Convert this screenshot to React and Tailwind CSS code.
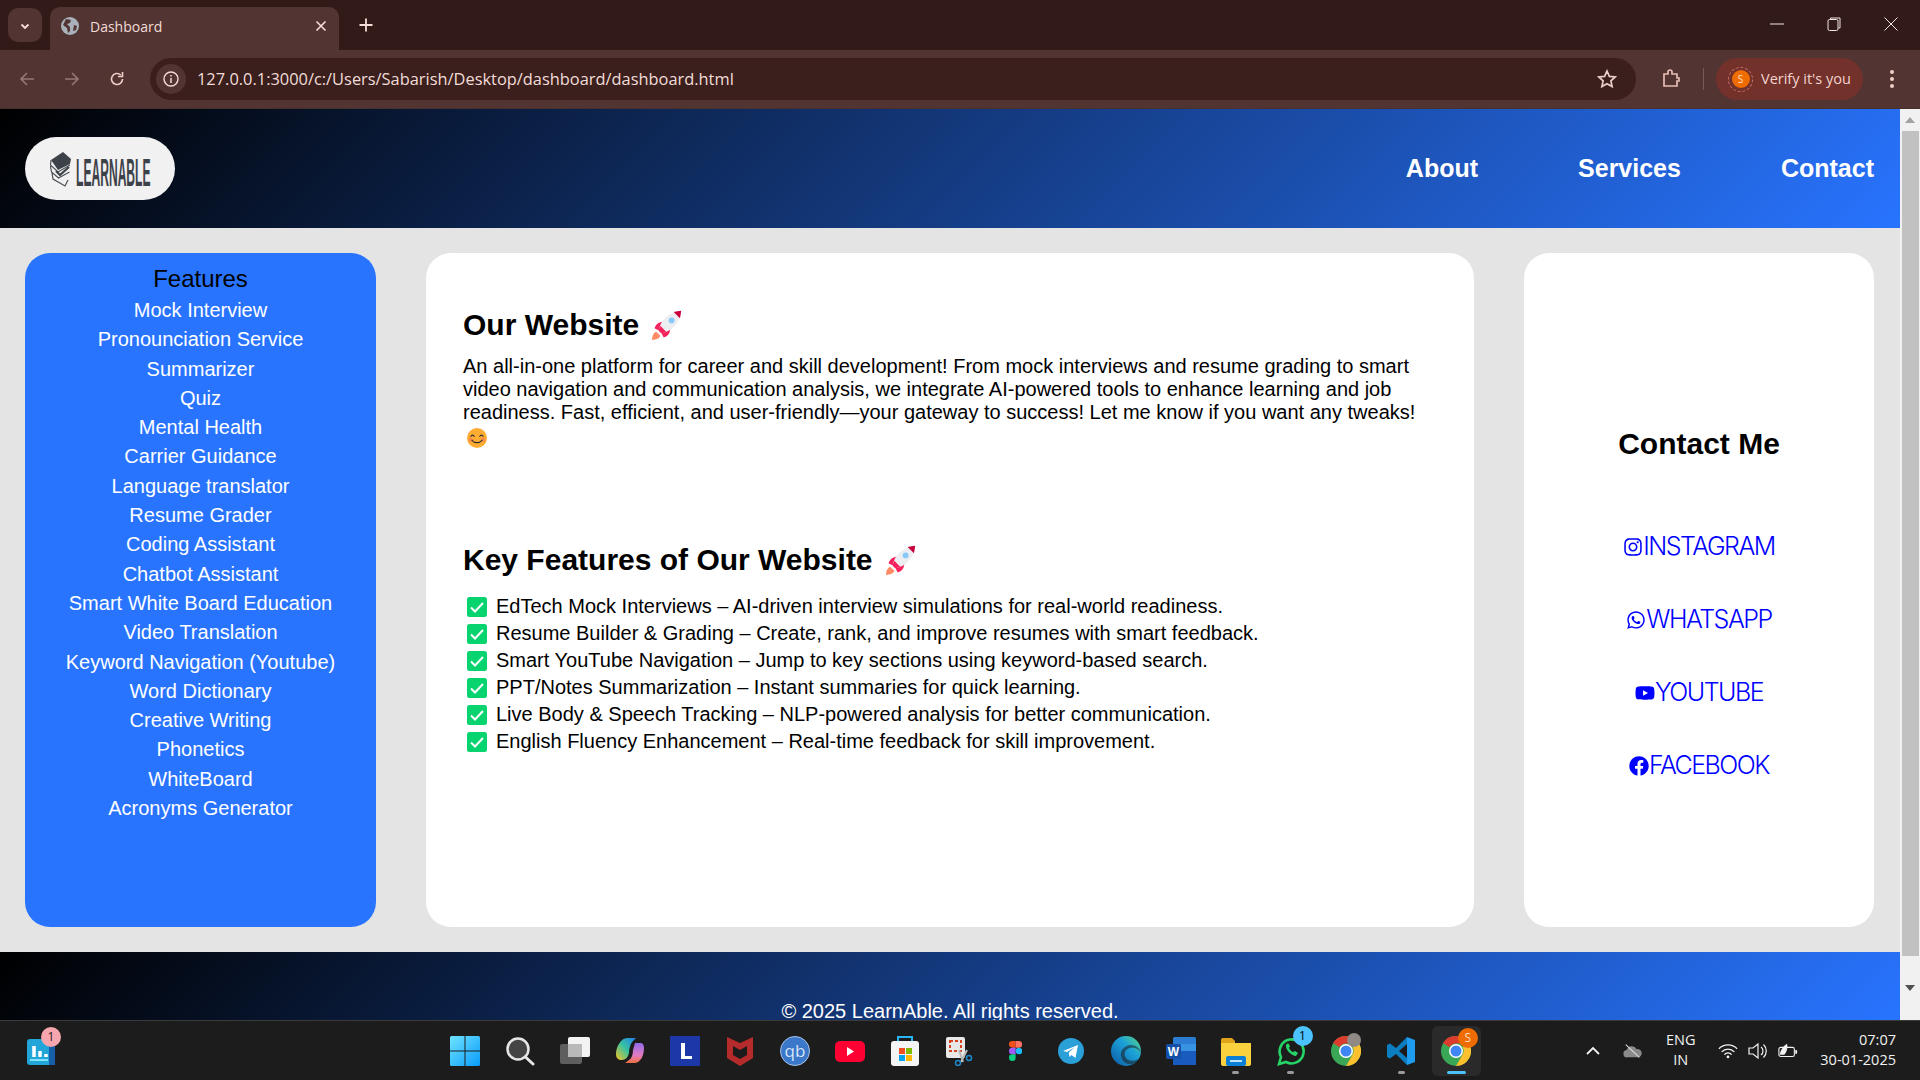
import { FaInstagram, FaWhatsapp, FaYoutube, FaFacebook } from "react-icons/fa";

const features = [
  "Mock Interview",
  "Pronounciation Service",
  "Summarizer",
  "Quiz",
  "Mental Health",
  "Carrier Guidance",
  "Language translator",
  "Resume Grader",
  "Coding Assistant",
  "Chatbot Assistant",
  "Smart White Board Education",
  "Video Translation",
  "Keyword Navigation (Youtube)",
  "Word Dictionary",
  "Creative Writing",
  "Phonetics",
  "WhiteBoard",
  "Acronyms Generator",
];

const keyFeatures = [
  "EdTech Mock Interviews – AI-driven interview simulations for real-world readiness.",
  "Resume Builder & Grading – Create, rank, and improve resumes with smart feedback.",
  "Smart YouTube Navigation – Jump to key sections using keyword-based search.",
  "PPT/Notes Summarization – Instant summaries for quick learning.",
  "Live Body & Speech Tracking – NLP-powered analysis for better communication.",
  "English Fluency Enhancement – Real-time feedback for skill improvement.",
];

const contacts = [
  { label: "INSTAGRAM", Icon: FaInstagram },
  { label: "WHATSAPP", Icon: FaWhatsapp },
  { label: "YOUTUBE", Icon: FaYoutube },
  { label: "FACEBOOK", Icon: FaFacebook },
];

function Rocket() {
  return (
    <svg viewBox="0 0 36 36" className="w-[30px] h-[30px] shrink-0">
      <path fill="#FF8A65" d="M0 36c0-5 2-9 5-10l5 5c-1 3-5 5-10 5z" />
      <path fill="#F4215C" d="M3 22c2-6 6-8 12-8L9 25zM14 33c6-2 8-6 8-12L11 27z" />
      <path fill="#ECEEF1" d="M8 25C10 12 20 3 35 1 33 16 24 26 11 28z" />
      <path fill="#F4215C" d="M8 25c.4-2 1-4 2-6l7 7c-2 1-4 1.600-6 2z" />
      <path fill="#C9003C" d="M26 2.500C29 1.800 32 1.200 35 1c-.2 3-.8 6-1.500 9z" />
      <circle cx="23.500" cy="12.500" r="3.500" fill="#88C9F9" />
    </svg>
  );
}

function Smile() {
  return (
    <svg viewBox="0 0 36 36" className="inline-block w-5 h-5 ml-1 align-[-6px]">
      <circle cx="18" cy="18" r="18" fill="#FFAC33" />
      <circle cx="7" cy="21" r="4" fill="#F4785A" opacity="0.6" />
      <circle cx="29" cy="21" r="4" fill="#F4785A" opacity="0.6" />
      <path d="M7 15c1-3 5-3 6 0M23 15c1-3 5-3 6 0" fill="none" stroke="#292F33" strokeWidth="2" strokeLinecap="round" />
      <path d="M9 22c4 6 14 6 18 0" fill="none" stroke="#292F33" strokeWidth="2.200" strokeLinecap="round" />
    </svg>
  );
}

function CheckBox() {
  return (
    <svg viewBox="0 0 20 20" className="w-5 h-5 shrink-0">
      <rect width="20" height="20" rx="2.500" fill="#07d36f" />
      <path d="M4 10.500l4 4 8-8.500" fill="none" stroke="#fff" strokeWidth="2" />
    </svg>
  );
}

function LogoBooks() {
  return (
    <svg viewBox="0 0 22 36" className="w-[22px] h-9 shrink-0">
      <path fill="#3d4249" d="M1 9L13 1l8 7-1 5-12 6z" />
      <path fill="none" stroke="#4b5056" strokeWidth="1.200" d="M1 9l-.5 5 7.500 7 12-7M.5 15l1 6 7 6 11-6M2 22l1 6 12 7 3-6" />
      <path fill="none" stroke="#3d4249" strokeWidth="2.200" d="M6 20l4 4 9-8" />
    </svg>
  );
}

/* ---- browser chrome ---- */

function ChromeBar() {
  return (
    <div className="shrink-0 font-['Open_Sans',sans-serif]">
      <div className="h-[50px] bg-[#321a18] flex items-end pl-[8px]">
        <div className="w-[34px] h-[34px] mb-[8px] rounded-[10px] bg-[#523432] flex items-center justify-center">
          <svg viewBox="0 0 12 12" className="w-3 h-3 mt-[2px]"><path d="M2.500 4.500L6 8l3.500-3.500" fill="none" stroke="#f6dfdb" strokeWidth="1.800" /></svg>
        </div>
        <div className="ml-[8px] w-[289px] h-[43px] bg-[#523432] rounded-t-[10px] flex items-center pl-[11px] pr-[12px] pb-[5px]">
          <svg viewBox="0 0 18 18" className="w-[18px] h-[18px] shrink-0">
            <circle cx="9" cy="9" r="9" fill="#a8b1b9" />
            <path fill="#523432" d="M5 2l5 1-1 3-3 1 3 3v4l-2 2-1-5-4-3zM13 8l3 1-1 4-3 1z" />
          </svg>
          <span className="ml-[11px] text-[14px] text-[#f2dcd8] flex-1">Dashboard</span>
          <svg viewBox="0 0 12 12" className="w-3 h-3"><path d="M1.500 1.500l9 9M10.500 1.500l-9 9" stroke="#f6dfdb" strokeWidth="1.600" /></svg>
        </div>
        <svg viewBox="0 0 14 14" className="w-[14px] h-[14px] ml-[20px] mb-[18px]"><path d="M7 .5v13M.5 7h13" stroke="#f6dfdb" strokeWidth="1.800" /></svg>
        <div className="flex-1" />
        <div className="flex items-center mb-[19px] pr-[22px] gap-[43px]">
          <svg viewBox="0 0 14 14" className="w-[14px] h-[14px]"><path d="M0 7h14" stroke="#f0e6e4" strokeWidth="1" /></svg>
          <svg viewBox="0 0 14 14" className="w-[14px] h-[14px]">
            <path d="M3.500 2.500V1h9.500v10h-1.500" fill="none" stroke="#f0e6e4" strokeWidth="1" />
            <rect x="1" y="2.500" width="10" height="11" rx="1.500" fill="none" stroke="#f0e6e4" strokeWidth="1" />
          </svg>
          <svg viewBox="0 0 14 14" className="w-[14px] h-[14px]"><path d="M.5.5l13 13M13.500.5l-13 13" stroke="#f0e6e4" strokeWidth="1" /></svg>
        </div>
      </div>
      <div className="h-[59px] bg-[#523432] border-b border-[#48302e] flex items-center pl-[19px]">
        <svg viewBox="0 0 16 16" className="w-4 h-4"><path d="M15 8H2M8 2L2 8l6 6" fill="none" stroke="#927a77" strokeWidth="1.600" /></svg>
        <svg viewBox="0 0 16 16" className="w-4 h-4 ml-[29px]"><path d="M1 8h13M8 2l6 6-6 6" fill="none" stroke="#927a77" strokeWidth="1.600" /></svg>
        <svg viewBox="0 0 16 16" className="w-4 h-4 ml-[29px]">
          <path d="M13.500 8a5.500 5.500 0 1 1-1.700-4" fill="none" stroke="#f0cfc8" strokeWidth="1.600" />
          <path d="M13.500 1v4.500H9" fill="none" stroke="#f0cfc8" strokeWidth="1.600" />
        </svg>
        <div className="ml-[25px] w-[1486px] h-[42px] rounded-full bg-[#3a1f1c] flex items-center pl-[6px] pr-[19px]">
          <div className="w-[30px] h-[30px] rounded-full bg-[#523432] flex items-center justify-center">
            <svg viewBox="0 0 16 16" className="w-4 h-4">
              <circle cx="8" cy="8" r="7" fill="none" stroke="#f2dcd8" strokeWidth="1.400" />
              <path d="M8 7v5M8 4v1.600" stroke="#f2dcd8" strokeWidth="1.500" />
            </svg>
          </div>
          <span className="ml-[11px] text-[16.400px] text-[#f2dcd8] flex-1 whitespace-nowrap">127.0.0.1:3000/c:/Users/Sabarish/Desktop/dashboard/dashboard.html</span>
          <svg viewBox="0 0 20 20" className="w-5 h-5">
            <path d="M10 2l2.400 5.400 5.800.6-4.300 3.900 1.200 5.700L10 14.700l-5.100 2.900 1.200-5.700L1.800 8l5.800-.6z" fill="none" stroke="#e8cfca" strokeWidth="1.700" />
          </svg>
        </div>
        <svg viewBox="0 0 20 20" className="w-5 h-5 ml-[25px]">
          <path d="M3 5h4V3a2 2 0 0 1 4 0v2h5v4h2v3h-2v5H3z" fill="none" stroke="#e8bdb5" strokeWidth="1.700" />
        </svg>
        <div className="ml-[22px] w-px h-[22px] bg-[#7a5a56]" />
        <div className="ml-[12px] w-[147px] h-[42px] rounded-full bg-[#72312b] flex items-center pl-[12px]">
          <div className="w-[25px] h-[25px] rounded-full border border-dashed border-[#c9726a] flex items-center justify-center shrink-0">
            <div className="w-[18px] h-[18px] rounded-full bg-[#ef6c00] text-[10px] text-[#ffe2cc] text-center leading-[18px]">S</div>
          </div>
          <span className="ml-[8px] -mt-[1px] text-[14.500px] text-[#f2d3ce] whitespace-nowrap">Verify it's you</span>
        </div>
        <div className="ml-[27px] flex flex-col gap-[3px]">
          <div className="w-1 h-1 rounded-full bg-[#f0cfc8]" />
          <div className="w-1 h-1 rounded-full bg-[#f0cfc8]" />
          <div className="w-1 h-1 rounded-full bg-[#f0cfc8]" />
        </div>
      </div>
    </div>
  );
}

/* ---- page ---- */

function Header() {
  return (
    <header className="shrink-0 h-[119px] bg-[linear-gradient(135deg,#000,#2874ff)] flex items-center justify-between pl-[25px] pr-[26px]">
      <div className="w-[150px] h-[63px] rounded-[32px] bg-[#f1f1f1] flex items-center pl-[25px] overflow-hidden">
        <LogoBooks />
        <span className="ml-[4px] mt-[8px] w-[74px] font-bold text-[39px] leading-none text-[#3d4249] whitespace-nowrap origin-left scale-x-[0.31]">LEARNABLE</span>
      </div>
      <nav className="flex gap-[100px] text-[25px] font-bold text-white">
        <a>About</a>
        <a>Services</a>
        <a>Contact</a>
      </nav>
    </header>
  );
}

function Sidebar() {
  return (
    <aside className="w-[351px] shrink-0 bg-[#2874ff] rounded-[25px] pt-[12px] text-center">
      <h3 className="text-[24px] leading-[28px] text-black">Features</h3>
      <ul className="text-[20px] leading-[23px] text-white flex flex-col gap-[6.300px] mt-[6px]">
        {features.map((f) => (
          <li key={f}>{f}</li>
        ))}
      </ul>
    </aside>
  );
}

function MainCard() {
  return (
    <main className="flex-1 bg-white rounded-[25px] px-[37px] pt-[55px] text-black">
      <h2 className="text-[30px] leading-[34px] font-bold flex items-center gap-[13px]">
        Our Website <Rocket />
      </h2>
      <p className="mt-[13px] text-[20px] leading-[23px]">
        An all-in-one platform for career and skill development! From mock interviews and resume grading to smart video navigation and communication analysis, we integrate AI-powered tools to enhance learning and job readiness. Fast, efficient, and user-friendly—your gateway to success! Let me know if you want any tweaks! <Smile />
      </p>
      <h2 className="mt-[95px] text-[30px] leading-[34px] font-bold flex items-center gap-[13px]">
        Key Features of Our Website <Rocket />
      </h2>
      <ul className="mt-[16px] text-[20px] leading-[27px]">
        {keyFeatures.map((k) => (
          <li key={k} className="flex items-center pl-[4px] gap-[9px]">
            <CheckBox />
            <span>{k}</span>
          </li>
        ))}
      </ul>
    </main>
  );
}

function ContactCard() {
  return (
    <aside className="w-[350px] shrink-0 bg-white rounded-[25px] pt-[173px] flex flex-col items-center">
      <h2 className="text-[30px] leading-[36px] font-bold text-black">Contact Me</h2>
      <div className="mt-[70px] flex flex-col gap-[43px] items-center">
        {contacts.map(({ label, Icon }) => (
          <a key={label} className="h-[30px] flex items-center text-[#0000ff] text-[25px] font-light font-['Inter',sans-serif] tracking-[-1.500px] whitespace-nowrap">
            <Icon className="w-[20px] h-[20px] shrink-0" />
            {label}
          </a>
        ))}
      </div>
    </aside>
  );
}

function Page() {
  return (
    <div className="flex-1 min-h-0 flex overflow-hidden font-['Liberation_Sans',Arial,sans-serif]">
      <div className="flex-1 min-w-0 flex flex-col">
        <Header />
        <div className="h-[724px] shrink-0 bg-[#e4e4e4] flex gap-[50px] pl-[25px] pr-[26px] pt-[25px] pb-[25px]">
          <Sidebar />
          <MainCard />
          <ContactCard />
        </div>
        <footer className="flex-1 bg-[linear-gradient(135deg,#000,#2874ff)] overflow-hidden text-center text-white text-[20px] leading-[23px] pt-[48px]">
          © 2025 LearnAble. All rights reserved.
        </footer>
      </div>
      <div className="w-[20px] shrink-0 bg-[#f1f1f1] flex flex-col items-center">
        <div className="h-[22px] flex items-center">
          <div className="w-0 h-0 border-x-[5px] border-x-transparent border-b-[6px] border-b-[#a3a3a3]" />
        </div>
        <div className="w-[17px] h-[825px] bg-[#c1c1c1]" />
        <div className="flex-1 flex items-center">
          <div className="w-0 h-0 border-x-[5px] border-x-transparent border-t-[6px] border-t-[#505050]" />
        </div>
      </div>
    </div>
  );
}

/* ---- taskbar icons, all 30x30 ---- */

const Svg = ({ children }) => (
  <svg viewBox="0 0 30 30" className="w-[30px] h-[30px]">{children}</svg>
);

function ChromeIcon() {
  return (
    <Svg>
      <circle cx="15" cy="15" r="15" fill="#3aa757" />
      <path d="M15 0a15 15 0 0 1 13 7.500H15a7.500 7.500 0 0 0-6.500 3.750L2 7a15 15 0 0 1 13-7z" fill="#dc3c2e" />
      <path d="M28 7.500A15 15 0 0 1 15 30l6.500-11.250A7.500 7.500 0 0 0 21.500 11z" fill="#fbc02d" />
      <circle cx="15" cy="15" r="7" fill="#fff" />
      <circle cx="15" cy="15" r="5.500" fill="#3f86f4" />
    </Svg>
  );
}

const taskIcons = [
  { key: "win", el: <Svg><defs><linearGradient id="win" x1="0" y1="0" x2="1" y2="1"><stop offset="0" stopColor="#6ee4ff" /><stop offset="1" stopColor="#0a9bfa" /></linearGradient></defs><path fill="url(#win)" d="M0 1.500A1.500 1.500 0 0 1 1.500 0h13v14.500H0zM15.500 0h13A1.500 1.500 0 0 1 30 1.500v13H15.500zM0 15.500h14.500V30h-13A1.500 1.500 0 0 1 0 28.500zM15.500 15.500H30v13a1.500 1.500 0 0 1-1.500 1.500h-13z" /></Svg> },
  { key: "search", el: <Svg><circle cx="13" cy="13" r="10.500" fill="#444" stroke="#e6e6e6" strokeWidth="2.500" /><path d="M20.500 21l7.500 7" stroke="#e6e6e6" strokeWidth="3" strokeLinecap="round" /></Svg> },
  { key: "tasks", el: <Svg><rect x="0" y="8" width="22" height="20" rx="2" fill="#5e5e5e" /><rect x="8" y="1" width="22" height="20" rx="2" fill="#f3f3f3" /><rect x="8" y="8" width="14" height="13" fill="#b9b9b9" /></Svg> },
  { key: "copilot", el: <Svg><defs><linearGradient id="copa" x1="0" y1="1" x2="1" y2="0"><stop offset="0" stopColor="#f7c325" /><stop offset="0.5" stopColor="#37c2a0" /><stop offset="1" stopColor="#1f7ff0" /></linearGradient><linearGradient id="copb" x1="0.500" y1="0" x2="0.500" y2="1"><stop offset="0" stopColor="#8f6be8" /><stop offset="0.6" stopColor="#e37bc4" /><stop offset="1" stopColor="#f2703e" /></linearGradient></defs><path fill="url(#copb)" d="M20 7h5c3 0 4 2 4 5 0 7-3 15-10 15h-9l4-3c3-2 4-6 4-10z" /><path fill="url(#copa)" d="M12 2h9l-3 3c-3 3-4 8-4 12-1 4-3 7-7 7-4 0-6-2-6-6C1 11 6 2 12 2z" /></Svg> },
  { key: "lms", el: <Svg><rect width="30" height="30" fill="#1b37a8" /><path fill="#fff" d="M11 7h4v13h7v3H11z" /></Svg> },
  { key: "mcafee", el: <Svg><path fill="#b52a2a" d="M2 1l13 6 13-6v21L15 30 2 22z" /><path fill="#1b1b1b" d="M8 10l7 4 7-4v9l-7 4-7-4z" /></Svg> },
  { key: "qb", el: <Svg><circle cx="15" cy="15" r="14.500" fill="#3b78c9" stroke="#a9c6ea" strokeWidth="1" /><text x="15" y="21" textAnchor="middle" fontSize="17" fill="#d7e6f7" fontFamily="Open Sans, sans-serif">qb</text></Svg> },
  { key: "yt", el: <Svg><rect x="0" y="5" width="30" height="21" rx="5" fill="#ff0033" /><path fill="#fff" d="M12 11l7 4.500-7 4.500z" /></Svg> },
  { key: "store", el: <Svg><path d="M8 5V1h14v4" fill="none" stroke="#29b6f6" strokeWidth="2" /><rect x="1" y="5" width="28" height="25" rx="3" fill="#f5f5f5" /><rect x="9" y="12" width="6" height="6" fill="#f25022" /><rect x="16" y="12" width="6" height="6" fill="#7fba00" /><rect x="9" y="19" width="6" height="6" fill="#00a4ef" /><rect x="16" y="19" width="6" height="6" fill="#ffb900" /></Svg> },
  { key: "snip", el: <Svg><rect x="1" y="1" width="19" height="21" rx="2" fill="#e8e8e8" /><rect x="5" y="5" width="11" height="10" fill="none" stroke="#d8431f" strokeWidth="2" strokeDasharray="3 2" /><path d="M14 14l4 12M22 14l-6 12" stroke="#b9b9b9" strokeWidth="2" /><circle cx="24" cy="22" r="2.500" fill="none" stroke="#1e88c9" strokeWidth="1.500" /><circle cx="13" cy="27" r="2.500" fill="none" stroke="#1e88c9" strokeWidth="1.500" /></Svg> },
  { key: "figma", el: <svg viewBox="0 0 12 18" className="w-[13.300px] h-5"><path fill="#f24e1e" d="M3 0h3v6H3a3 3 0 0 1 0-6z" /><path fill="#ff7262" d="M6 0h3a3 3 0 0 1 0 6H6z" /><path fill="#a259ff" d="M3 6h3v6H3a3 3 0 0 1 0-6z" /><circle cx="9" cy="9" r="3" fill="#1abcfe" /><path fill="#0acf83" d="M3 12h3v3a3 3 0 1 1-3-3z" /></svg> },
  { key: "telegram", el: <Svg><circle cx="15" cy="15" r="13" fill="#2a9fd8" /><path fill="#fff" d="M7 15l15-6-2.500 13-4-3-2 2-.7-4.500 6.200-5.500-8 5z" /></Svg> },
  { key: "edge", el: <Svg><defs><linearGradient id="edge" x1="0" y1="1" x2="1" y2="0"><stop offset="0" stopColor="#0c59a4" /><stop offset="0.6" stopColor="#1ba1d8" /><stop offset="1" stopColor="#5dd67f" /></linearGradient></defs><circle cx="15" cy="15" r="15" fill="url(#edge)" /><path fill="#1b1b1b" d="M30 17c-2-5-7-6-11-5-5 1-7 6-4 10 2 3 7 4 13 1-2 3-4 4-6 5-6 1-11-2-12-8-1-5 3-10 9-11 6 0 10 3 11 8z" opacity="0.55" /></Svg> },
  { key: "word", el: <Svg><rect x="7" y="1" width="23" height="28" rx="1.500" fill="#2b7cd3" /><rect x="7" y="15" width="23" height="14" fill="#185abd" /><rect x="7" y="8" width="23" height="7" fill="#41a5ee" opacity="0.6" /><rect x="0" y="8" width="15" height="15" rx="1.500" fill="#1550a8" /><text x="7.500" y="20" textAnchor="middle" fontSize="12" fontWeight="700" fill="#fff" fontFamily="Liberation Sans, sans-serif">W</text></Svg> },
  { key: "files", dot: true, el: <Svg><path fill="#e0a21b" d="M0 4a2 2 0 0 1 2-2h9l3 3v5H0z" /><path fill="#fbd13d" d="M0 7h30v21a2 2 0 0 1-2 2H2a2 2 0 0 1-2-2z" /><rect x="5" y="20" width="20" height="10" rx="2" fill="#0c80d6" /><rect x="9" y="24" width="12" height="2" fill="#bfe3fb" /></Svg> },
  { key: "wa", badge: "1", dot: true, el: <Svg><path d="M3 28l2-7a12 12 0 1 1 5 5z" fill="none" stroke="#25d366" strokeWidth="2.600" /><path d="M10 9c-1 4 5 11 10 11l2-3-3-2-2 1c-1 0-3-2-4-4l1-2-2-3z" fill="#25d366" /></Svg> },
  { key: "chrome2", photo: true, el: <ChromeIcon /> },
  { key: "vs", dot: true, el: <Svg><path fill="#0b7ec2" d="M21 1l-11 11-6-4.500L1 9v12l3 1.500 6-4.500 11 11z" /><path fill="#1b1b1b" d="M21 8L13 15l8 7z" /><path fill="#1f9cf0" d="M21 1l8 3v22l-8 3z" /></Svg> },
  { key: "chrome", active: true, el: <ChromeIcon /> },
];

function TaskIcon({ item }) {
  return (
    <div className="relative w-[55.100px] h-[52px] flex items-center justify-center">
      {item.active && <span className="absolute inset-x-[3px] inset-y-[1px] bg-[#2a2a2a] rounded-[6px]" />}
      <div className="relative flex">{item.el}</div>
      {item.badge && (
        <span className="absolute top-[1px] right-[6px] w-5 h-5 rounded-full bg-[#4cc2ff] text-[12px] leading-5 text-center text-black">{item.badge}</span>
      )}
      {item.photo && <span className="absolute top-[8px] right-[13px] w-[14px] h-[14px] rounded-full bg-[#8f8a86]" />}
      {item.active && (
        <span className="absolute top-[3px] right-[6px] w-5 h-5 rounded-full bg-[#ef6c00] text-[12px] leading-5 text-center text-[#ffd9bd]">S</span>
      )}
      {item.dot && <span className="absolute bottom-[3px] w-[7px] h-[3px] rounded-full bg-[#9a9a9a]" />}
      {item.active && <span className="absolute bottom-[3px] w-[19px] h-[3px] rounded-full bg-[#4cc2ff]" />}
    </div>
  );
}

function Taskbar() {
  return (
    <div className="h-[60px] shrink-0 bg-[#1c1c1c] border-t border-[#3a3a3a] flex items-center font-['Open_Sans',sans-serif] text-[#f2f2f2]">
      <div className="relative ml-[27px] w-7 h-7">
        <svg viewBox="0 0 28 28" className="w-7 h-7">
          <rect x="0" y="2" width="28" height="26" rx="3" fill="#22a5d8" />
          <rect x="22" y="2" width="6" height="26" fill="#1560a8" />
          <path d="M7 9v11M13 14v6M19 17v3" stroke="#fff" strokeWidth="3.500" />
          <rect x="3" y="22" width="18" height="2" fill="#7de3f7" />
        </svg>
        <span className="absolute -top-[10px] left-[14px] w-5 h-5 rounded-full bg-[#f7a6ad] text-[12px] leading-5 text-center text-[#222]">1</span>
      </div>
      <div className="ml-[382px] flex items-center">
        {taskIcons.map((item) => (
          <TaskIcon key={item.key} item={item} />
        ))}
      </div>
      <svg viewBox="0 0 14 10" className="ml-[102px] w-[14px] h-[10px]"><path d="M1 8l6-6 6 6" fill="none" stroke="#f2f2f2" strokeWidth="1.800" /></svg>
      <svg viewBox="0 0 22 16" className="ml-[23px] w-5 h-[16px]">
        <path fill="#8a8a8a" d="M5 15a4 4 0 0 1-1-8 6 6 0 0 1 11-1 4.500 4.500 0 0 1 2 9z" />
        <path d="M3 1l15 14" stroke="#ddd" strokeWidth="1.200" />
      </svg>
      <div className="ml-[23px] w-[30px] text-[14.500px] leading-[20px] text-center -mt-[2px]">ENG<br />IN</div>
      <svg viewBox="0 0 22 16" className="ml-[22px] w-5 h-4">
        <path d="M1 5.500a14 14 0 0 1 20 0M4 9a9.500 9.500 0 0 1 14 0M7 12a5 5 0 0 1 8 0" fill="none" stroke="#f2f2f2" strokeWidth="1.400" />
        <circle cx="11" cy="14.500" r="1.500" fill="#f2f2f2" />
      </svg>
      <svg viewBox="0 0 20 18" className="ml-[10px] w-5 h-[18px]">
        <path d="M1 6h4l5-4v14l-5-4H1z" fill="none" stroke="#f2f2f2" strokeWidth="1.200" />
        <path d="M13 5a5 5 0 0 1 0 8M15.500 2.500a9 9 0 0 1 0 13" fill="none" stroke="#f2f2f2" strokeWidth="1.200" />
      </svg>
      <svg viewBox="0 0 22 18" className="ml-[10px] w-5 h-[18px]">
        <rect x="1" y="5" width="17" height="10" rx="2" fill="none" stroke="#f2f2f2" strokeWidth="1.200" />
        <rect x="19" y="8" width="2" height="4" fill="#f2f2f2" />
        <path d="M2 13C3 6 7 3 10 1c1 4 0 9-3 12z" fill="#f2f2f2" />
      </svg>
      <div className="ml-auto mr-[24px] -mt-[2px] text-[14.500px] leading-[20px] text-right">07:07<br />30-01-2025</div>
    </div>
  );
}

export default function App() {
  return (
    <div className="w-[1920px] h-[1080px] flex flex-col overflow-hidden">
      <ChromeBar />
      <Page />
      <Taskbar />
    </div>
  );
}
